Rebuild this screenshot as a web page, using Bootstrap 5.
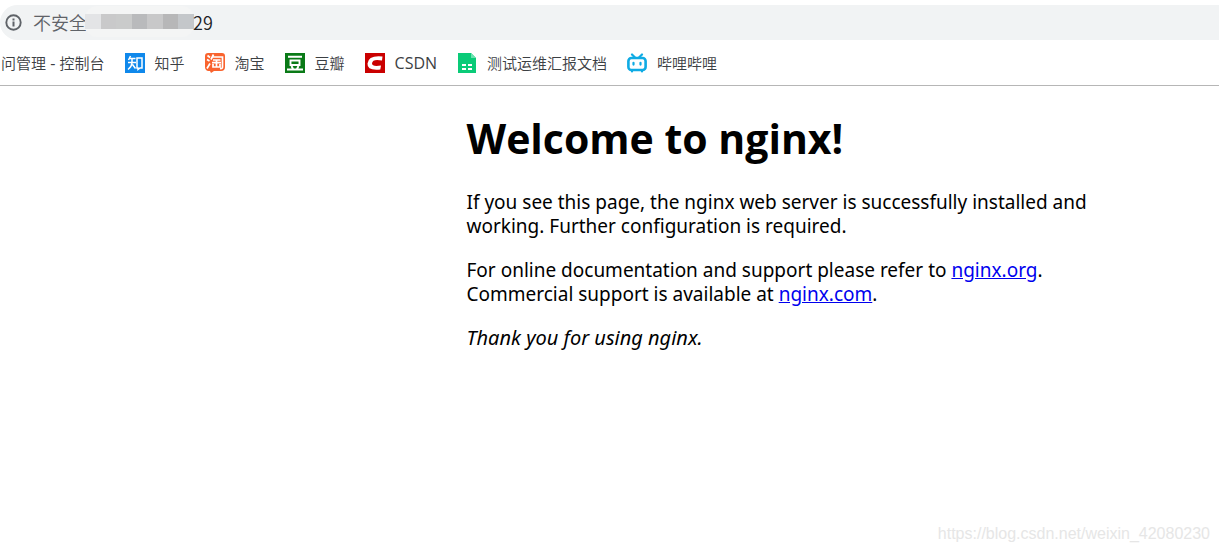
<!DOCTYPE html>
<html lang="zh-CN">
<head>
<meta charset="utf-8">
<meta name="viewport" content="width=device-width, initial-scale=1">
<title>Welcome to nginx!</title>
<link href="https://cdn.jsdelivr.net/npm/bootstrap@5.3.0/dist/css/bootstrap.min.css" rel="stylesheet">
<style>
  body { font-family: "Noto Sans", "Noto Sans CJK SC", sans-serif; color: #000; background: #fff; }
  .address-bar { margin-top: 5px; height: 35px; padding-left: 5px; padding-bottom: 2px; background: #f1f3f4; border-radius: 18px 0 0 18px; font-family: "Noto Sans CJK SC", sans-serif; font-weight: 350; font-size: 18px; line-height: 32px; color: #5f6368; }
  .site-info { margin: 2px 11px 0 0; }
  .host-mask { width: 109px; height: 31px; margin-left: -2px; padding: 8px 0; background: #f4f5f5; border-radius: 12px; }
  .host-mask span { flex: 1 1 0; }
  .host-end { color: #202124; margin-left: -1px; }
  .bookmarks { height: 46px; padding: 1px 0 0 1px; border-bottom: 1px solid #b6b6b6; gap: 20px; font-size: 15px; font-weight: 350; line-height: 20px; font-family: "Noto Sans CJK SC", sans-serif; }
  .bookmarks a { color: #3c4043; gap: 10px; }
  .bookmarks svg { flex: none; }
  .latin { font-family: "Open Sans", sans-serif; font-size: 16px; font-weight: 400; }
  .welcome { margin-left: calc(50% - 143px); width: 636px; max-width: 53%; padding-top: 28px; font-size: 19px; line-height: 24px; }
  .welcome h1 { font-family: "Open Sans", sans-serif; font-size: 41px; font-weight: 700; line-height: 48px; margin-bottom: 28px; }
  .welcome p { margin-bottom: 20px; }
  .welcome .thanks { font-size: 20px; }
  .welcome a { color: #0000ee; }
  .watermark { right: 9px; bottom: 8px; font: 16px/20px "Liberation Sans", Arial, sans-serif; color: #e6e6e6; }
</style>
</head>
<body class="min-vh-100 position-relative">
<header>
  <div class="address-bar d-flex align-items-center text-nowrap">
    <svg class="site-info" width="17" height="17" viewBox="0 0 17 17" aria-hidden="true"><circle cx="8.500" cy="8.500" r="7.200" fill="none" stroke="#5f6368" stroke-width="1.900"/><path d="M7.500 7.500h2v5h-2zM7.500 4.500h2v2h-2z" fill="#5f6368"/></svg>
    <span>不安全</span>
    <div class="host-mask d-flex" aria-hidden="true">
      <span style="background:#e3e4e6"></span><span style="background:#c9c9ca"></span><span style="background:#cacbcb"></span><span style="background:#b9babc"></span><span style="background:#c8c8c9"></span><span style="background:#b7b7b8"></span><span style="background:#c4c7ca"></span>
    </div>
    <span class="host-end">29</span>
  </div>
  <nav class="bookmarks d-flex align-items-center text-nowrap" aria-label="书签">
    <a class="text-decoration-none" href="#">问管理<span class="latin"> - </span>控制台</a>
    <a class="d-flex align-items-center text-decoration-none" href="#">
      <svg width="20" height="20" viewBox="0 0 20 20" aria-hidden="true"><rect width="20" height="20" fill="#0f88eb"/><path d="M5.500 3 3.500 7M4.500 5.500h6M3 9.500h8M7 5.500V10Q6.500 14 3 16.500M7.500 11.500l3 4M12 5h5v10h-2l-2 1.500V15h-1z" fill="none" stroke="#fff" stroke-width="1.500"/></svg>知乎</a>
    <a class="d-flex align-items-center text-decoration-none" href="#">
      <svg width="20" height="20" viewBox="0 0 20 20" aria-hidden="true"><path d="M3 0h14q3 0 3 3v11q0 4-4 4H9l-3 2-1-2H3q-3-1-3-4V3q0-3 3-3z" fill="#f9632e"/><path d="M2.500 2.500l2.500 2M2 6.500l2.500 1.500M2 15.500l3-5M8.500 1.500 6 6.500M8 4h9.500V14q0 2-2.500 1.500M8 7h7.500M7 9.700h9M11.500 7v7M8 11v3h7v-3" fill="none" stroke="#fff" stroke-width="1.700"/></svg>淘宝</a>
    <a class="d-flex align-items-center text-decoration-none" href="#">
      <svg width="20" height="20" viewBox="0 0 20 20" aria-hidden="true"><rect width="20" height="20" fill="#0a7a17"/><path d="M3 3.800h14M2 16.500h16M5.500 7.500h9v4.500h-9zM6.500 13l1.500 3M13.500 13 12 16" fill="none" stroke="#fff" stroke-width="1.900"/></svg>豆瓣</a>
    <a class="d-flex align-items-center text-decoration-none" href="#">
      <svg width="20" height="20" viewBox="0 0 20 20" aria-hidden="true"><rect width="20" height="20" fill="#ca0000"/><path d="M17.500 3.500 17 7.500Q7.500 5.500 7 10.300 7 14 16 12.500l-.700 4Q2 18 2.500 10.500 3.500 2 17.500 3.500z" fill="#fff"/></svg><span class="latin">CSDN</span></a>
    <a class="d-flex align-items-center text-decoration-none" href="#">
      <svg width="20" height="20" viewBox="0 0 20 20" aria-hidden="true"><path d="M1 0h13l5 5v15H1z" fill="#0acb78"/><path d="M14 0v5h5z" fill="#6ce2b0"/><path d="M5 11h4v2H5zM11 11h4v2h-4zM5 15h4v2H5zM11 15h4v2h-4z" fill="#fff"/></svg>测试运维汇报文档</a>
    <a class="d-flex align-items-center text-decoration-none" href="#">
      <svg width="20" height="20" viewBox="0 0 20 20" aria-hidden="true"><path d="M5 1.500l3 3M15 1.500l-3 3M5 17v1.500M15 17v1.500" stroke="#0fabe4" stroke-width="2.200" stroke-linecap="round"/><rect x="1.400" y="5" width="17.200" height="12" rx="3" fill="none" stroke="#0fabe4" stroke-width="2.600"/><path d="M6.500 9.800v1.800M13.500 9.800v1.800" stroke="#0fabe4" stroke-width="2.200" stroke-linecap="round"/></svg>哔哩哔哩</a>
  </nav>
</header>
<main class="welcome">
  <h1>Welcome to nginx!</h1>
  <p>If you see this page, the nginx web server is successfully installed and working. Further configuration is required.</p>
  <p>For online documentation and support please refer to <a href="#">nginx.org</a>.<br>Commercial support is available at <a href="#">nginx.com</a>.</p>
  <p class="thanks"><em>Thank you for using nginx.</em></p>
</main>
<div class="watermark position-absolute">https://blog.csdn.net/weixin_42080230</div>
<script src="https://cdn.jsdelivr.net/npm/bootstrap@5.3.0/dist/js/bootstrap.bundle.min.js"></script>
</body>
</html>
